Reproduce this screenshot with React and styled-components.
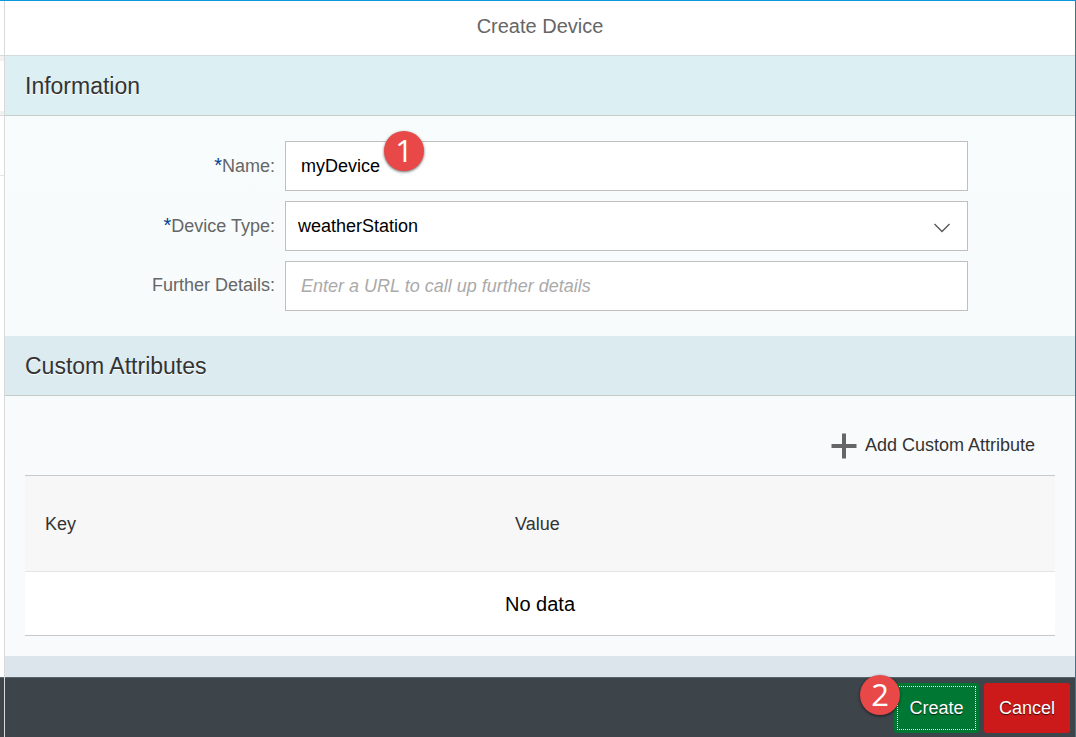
import React from "react";
import styled, { createGlobalStyle } from "styled-components";

const GlobalStyle = createGlobalStyle`
  *, *::before, *::after { box-sizing: border-box; }
  body {
    margin: 0;
    background: #fff;
    color: #333;
    font-family: "Liberation Sans", Arial, Helvetica, sans-serif;
    font-size: 18px;
  }
`;

const Shell = styled.div`
  display: flex;
  height: 100vh;
  overflow: hidden;
  border-top: 1px solid #0a97dc;
  border-right: 1px solid #1c84a0;
`;

/* Sliver of the list that stays visible beside the dialog */
const Rail = styled.div`
  display: flex;
  flex-direction: column;
  flex: none;
  width: 5px;
  border-right: 1px solid #d9d9d9;
`;

const RailHeader = styled.div`
  height: 55px;
  border-bottom: 1px solid #d9d9d9;
`;

const RailSearch = styled.div`
  height: 60px;
  border-top: 5px solid #f2f2f2;
  border-bottom: 1px solid #d9d9d9;
  box-shadow: inset 0 -4px 0 #f2f2f2;
`;

const RailRow = styled.div`
  height: 60px;
  border-bottom: 1px solid #e5e5e5;
`;

const RailFooter = styled.div`
  height: 60px;
  margin-top: auto;
  background: #3d444a;
  border-top: 1px solid #59656b;
`;

const Dialog = styled.main`
  display: flex;
  flex-direction: column;
  flex: 1;
  min-width: 0;
`;

const TitleBar = styled.header`
  display: flex;
  align-items: center;
  justify-content: center;
  height: 55px;
  padding-bottom: 4px;
  flex: none;
  background: #fff;
  border-bottom: 1px solid #d2dcde;
`;

const Title = styled.h1`
  margin: 0;
  font-size: 20px;
  font-weight: 400;
  line-height: 24px;
  color: #666;
`;

const Body = styled.div`
  flex: 1;
  min-height: 0;
  overflow: hidden;
  background: linear-gradient(#f7fcfc, #f9fafc);
`;

const SectionTitle = styled.h2`
  display: flex;
  align-items: center;
  height: 60px;
  margin: 0;
  padding: 2px 20px 0;
  background: ${(p) => p.$tint};
  border-bottom: 1px solid #c4cccc;
  font-size: 23px;
  font-weight: 400;
  text-shadow: 0 1px 0 #fff;
`;

const Form = styled.form`
  display: flex;
  flex-direction: column;
  gap: 10px;
  padding: 25px 20px;
`;

const Field = styled.div`
  display: grid;
  grid-template-columns: 260fr 683fr 87fr;
  align-items: center;
`;

const Label = styled.label`
  padding: 0 10px 2px 0;
  line-height: 20px;
  text-align: right;
  color: #666;
`;

const Required = styled.span`
  color: #003f8f;
  font-size: 20px;
  line-height: 1;
`;

const Control = styled.div`
  position: relative;
  display: grid;
  align-items: center;
`;

const TextInput = styled.input`
  grid-area: 1 / 1;
  width: 100%;
  height: 50px;
  padding: 0 15px;
  border: 1px solid #bfbfbf;
  border-radius: 0;
  background: #fff;
  color: #000;
  font: inherit;
  outline: none;

  &::placeholder {
    color: #aaa;
    font-style: italic;
    opacity: 1;
  }
`;

const Select = styled.select`
  grid-area: 1 / 1;
  width: 100%;
  height: 50px;
  padding: 0 50px 0 12px;
  appearance: none;
  border: 1px solid #bfbfbf;
  border-radius: 0;
  background: #fff;
  color: #000;
  font: inherit;
  outline: none;
`;

const Chevron = styled.svg`
  grid-area: 1 / 1;
  justify-self: end;
  margin: 4px 18px 0 0;
  pointer-events: none;
`;

const Badge = styled.span`
  position: absolute;
  left: ${(p) => p.$left}px;
  top: ${(p) => p.$top}px;
  z-index: 1;
  width: 40px;
  height: 40px;
  border-radius: 50%;
  background: #e84848;
  box-shadow: 0 1px 3px rgba(0, 0, 0, 0.6);
  color: #fff;
  font-family: "Open Sans", "Noto Sans", sans-serif;
  font-size: 31px;
  line-height: 38px;
  text-align: center;
  text-shadow: none;
`;

const TableArea = styled.section`
  padding: 20px;
`;

const Toolbar = styled.div`
  display: flex;
  justify-content: flex-end;
  align-items: center;
  height: 59px;
  padding: 0 20px;
`;

const AddButton = styled.button`
  display: flex;
  align-items: center;
  gap: 8px;
  padding: 0;
  border: 0;
  background: none;
  color: #333;
  font: inherit;
`;

const Table = styled.table`
  width: 100%;
  table-layout: fixed;
  border-collapse: separate;
  border-spacing: 0;
  border-top: 1px solid #c8c8c8;
`;

const HeadCell = styled.th`
  height: 96px;
  width: ${(p) => p.$width || "auto"};
  padding: 2px 20px 0;
  background: #f7f7f7;
  border-bottom: 1px solid #e5e5e5;
  font-weight: 400;
  text-align: left;
`;

const EmptyCell = styled.td`
  height: 64px;
  padding: 2px 20px 0;
  background: #fff;
  border-bottom: 1px solid #c8c8cc;
  color: #000;
  font-size: 20px;
  text-align: center;
`;

const NextSection = styled.div`
  height: 60px;
  background: #dde5ec;
`;

const Footer = styled.footer`
  display: flex;
  align-items: flex-start;
  justify-content: flex-end;
  gap: 5px;
  height: 60px;
  flex: none;
  padding: 5px 5px 0;
  background: #3d444a;
  border-top: 1px solid #59656b;
`;

const ActionSlot = styled.div`
  position: relative;
`;

const ActionButton = styled.button`
  height: 50px;
  width: ${(p) => p.$width}px;
  padding: 0;
  border: 0;
  border-radius: 3px;
  background: ${(p) => p.$color};
  color: #fff;
  font: inherit;
  text-shadow: 0 1px 1px rgba(0, 0, 0, 0.7);
  outline: ${(p) => (p.$focused ? "1px dotted #fff" : "none")};
  outline-offset: -4px;
`;

export default function App() {
  return (
    <>
      <GlobalStyle />
      <Shell>
        <Rail>
          <RailHeader />
          <RailSearch />
          <RailRow />
          <RailFooter />
        </Rail>
        <Dialog>
          <TitleBar>
            <Title>Create Device</Title>
          </TitleBar>
          <Body>
            <SectionTitle $tint="#dceff2">Information</SectionTitle>
            <Form>
              <Field>
                <Label htmlFor="name">
                  <Required>*</Required>Name:
                </Label>
                <Control>
                  <TextInput id="name" defaultValue="myDevice" />
                  <Badge $left={99} $top={-10}>1</Badge>
                </Control>
              </Field>
              <Field>
                <Label htmlFor="type">
                  <Required>*</Required>Device Type:
                </Label>
                <Control>
                  <Select id="type" defaultValue="weatherStation">
                    <option>weatherStation</option>
                  </Select>
                  <Chevron width="16" height="10" viewBox="0 0 16 10" fill="none" stroke="#555" strokeWidth="1.3">
                    <path d="M0.5 1L8 8.5L15.5 1" />
                  </Chevron>
                </Control>
              </Field>
              <Field>
                <Label htmlFor="details">Further Details:</Label>
                <Control>
                  <TextInput id="details" placeholder="Enter a URL to call up further details" />
                </Control>
              </Field>
            </Form>
            <SectionTitle $tint="#dcebf0">Custom Attributes</SectionTitle>
            <TableArea>
              <Toolbar>
                <AddButton type="button">
                  <svg width="26" height="26" viewBox="0 0 26 26" fill="#666">
                    <path d="M11 0.5h4v10.5h10.5v4h-10.5v10.5h-4v-10.5h-10.5v-4h10.5z" />
                  </svg>
                  Add Custom Attribute
                </AddButton>
              </Toolbar>
              <Table>
                <thead>
                  <tr>
                    <HeadCell>Key</HeadCell>
                    <HeadCell>Value</HeadCell>
                    <HeadCell $width="90px" />
                  </tr>
                </thead>
                <tbody>
                  <tr>
                    <EmptyCell colSpan={3}>No data</EmptyCell>
                  </tr>
                </tbody>
              </Table>
            </TableArea>
            <NextSection />
          </Body>
          <Footer>
            <ActionSlot>
              <ActionButton type="button" $width={85} $color="#007833" $focused>
                Create
              </ActionButton>
              <Badge $left={-34} $top={-8}>2</Badge>
            </ActionSlot>
            <ActionButton type="button" $width={86} $color="#cc1919">
              Cancel
            </ActionButton>
          </Footer>
        </Dialog>
      </Shell>
    </>
  );
}
